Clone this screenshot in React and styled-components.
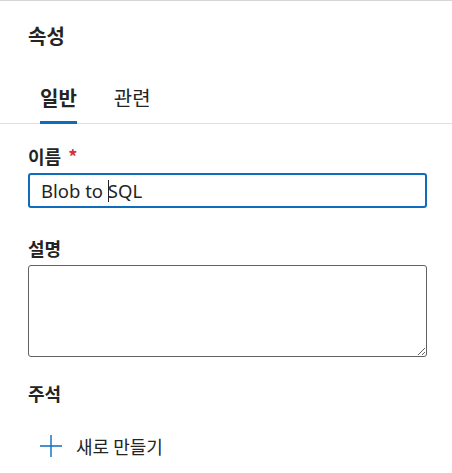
import styled, { createGlobalStyle } from "styled-components";

const Global = createGlobalStyle`
  html, body {
    margin: 0;
    padding: 0;
    background: #fff;
  }
  body {
    font-family: "Noto Sans", "Noto Sans CJK KR", sans-serif;
    color: #242424;
  }
`

const Panel = styled.div`
  width: 452px;
  min-height: 473px;
  border-top: 1px solid #d6d6d6;
  box-sizing: border-box;
  padding-top: 21px;
`

const Title = styled.h2`
  margin: 0 0 0 28px;
  font-family: "Noto Sans CJK KR", sans-serif;
  font-size: 20px;
  font-weight: 700;
  line-height: 28px;
`

const TabBar = styled.div`
  display: flex;
  gap: 37px;
  margin-top: 34px;
  padding-left: 40px;
  border-bottom: 1px solid #e0e0e0;
`

const Tab = styled.div`
  position: relative;
  padding-bottom: 11px;
  font-family: "Noto Sans CJK KR", sans-serif;
  font-size: 20px;
  line-height: 28px;
  font-weight: ${(p) => (p.$active ? 700 : 400)};
  &::after {
    content: "";
    display: ${(p) => (p.$active ? "block" : "none")};
    position: absolute;
    left: 0;
    right: 0;
    bottom: -1px;
    height: 3px;
    background: #0f6cbd;
  }
`

const Form = styled.div`
  padding: 20px 25px 0 28px;
  display: flex;
  flex-direction: column;
`

const Label = styled.div`
  font-family: "Noto Sans CJK KR", sans-serif;
  font-size: 18px;
  font-weight: 700;
  line-height: 24px;
  margin-top: ${(p) => p.$top || 0}px;
  margin-bottom: ${(p) => p.$bottom || 5}px;
`

const Req = styled.span`
  color: #d13438;
  margin-left: 7px;
  font-weight: 700;
`

const InputBox = styled.div`
  height: 35px;
  box-sizing: border-box;
  border: 2px solid #0f6cbd;
  border-radius: 3px;
  padding: 0 11px;
  display: flex;
  align-items: center;
  font-family: "Noto Sans", sans-serif;
  font-size: 18.5px;
  color: #242424;
  white-space: pre;
`

const Caret = styled.span`
  display: inline-block;
  width: 1px;
  height: 22px;
  background: #242424;
  margin-right: -1px;
`

const TextArea = styled.textarea`
  height: 92px;
  box-sizing: border-box;
  border: 1px solid #616161;
  border-radius: 3px;
  outline: none;
  resize: vertical;
  font-family: inherit;
  font-size: 16px;
  padding: 6px 10px;
`

const AddButton = styled.button`
  display: flex;
  align-items: center;
  gap: 13px;
  border: none;
  background: none;
  padding: 0 0 0 11px;
  margin-top: 24px;
  font-family: "Noto Sans CJK KR", sans-serif;
  font-size: 18px;
  color: #242424;
  cursor: pointer;
  height: 24px;
`

function PlusIcon() {
  return (
    <svg width="24" height="24" viewBox="0 0 24 24" fill="none">
      <path d="M12 1v22M1 12h22" stroke="#0f6cbd" strokeWidth="1.4" />
    </svg>
  )
}

export default function App() {
  return (
    <>
      <Global />
      <Panel>
        <Title>속성</Title>
        <TabBar>
          <Tab $active>일반</Tab>
          <Tab>관련</Tab>
        </TabBar>
        <Form>
          <Label>
            이름<Req>*</Req>
          </Label>
          <InputBox>
            <span>Blob to </span>
            <Caret />
            <span>SQL</span>
          </InputBox>
          <Label $top={28} $bottom={5}>설명</Label>
          <TextArea />
          <Label $top={24} $bottom={0}>주석</Label>
          <AddButton>
            <PlusIcon />
            새로 만들기
          </AddButton>
        </Form>
      </Panel>
    </>
  )
}
